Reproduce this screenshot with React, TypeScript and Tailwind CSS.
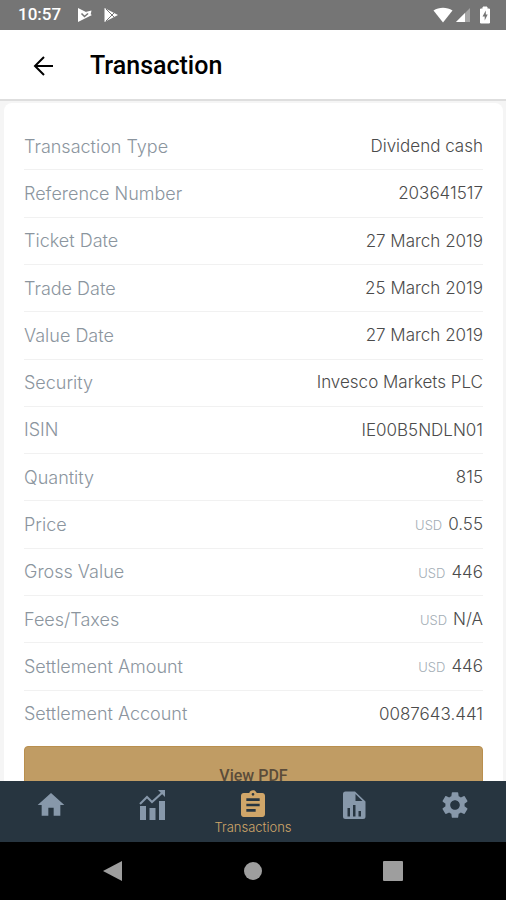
import { useState } from "react";
import type { ReactNode } from "react";
import { MdAssignment, MdHome, MdSettings } from "react-icons/md";

interface Detail {
  label: string;
  value: string;
  currency?: string;
}

const details: Detail[] = [
  { label: "Transaction Type", value: "Dividend cash" },
  { label: "Reference Number", value: "203641517" },
  { label: "Ticket Date", value: "27 March 2019" },
  { label: "Trade Date", value: "25 March 2019" },
  { label: "Value Date", value: "27 March 2019" },
  { label: "Security", value: "Invesco Markets PLC" },
  { label: "ISIN", value: "IE00B5NDLN01" },
  { label: "Quantity", value: "815" },
  { label: "Price", value: "0.55", currency: "USD" },
  { label: "Gross Value", value: "446", currency: "USD" },
  { label: "Fees/Taxes", value: "N/A", currency: "USD" },
  { label: "Settlement Amount", value: "446", currency: "USD" },
  { label: "Settlement Account", value: "0087643.441" },
];

const ChartIcon = () => (
  <svg className="size-8" viewBox="0 0 32 32" fill="currentColor">
    <path d="M4 17h6v14H4zM13.500 19h6v12h-6zM23 12h6v19h-6z" />
    <path d="M4 15l7-7 5 5L27 3" fill="none" stroke="currentColor" strokeWidth="2" />
    <path d="M22 1h7v7z" />
  </svg>
);

const ReportIcon = () => (
  <svg className="size-8" viewBox="0 0 32 32" fill="currentColor">
    <path
      fillRule="evenodd"
      d="M7.500 2.500h9.500l10.500 10v15a2.500 2.500 0 0 1-2.500 2.500H7.500A2.500 2.500 0 0 1 5 27.500V5A2.500 2.500 0 0 1 7.500 2.500zM17.500 5v7h7zM9.500 19v8.500h2.500v-8.500zM15 16v11.500h2.500V16zM20.500 22v5.500h2.500v-5.500z"
    />
  </svg>
);

const tabs: { name: string; icon: ReactNode }[] = [
  { name: "Home", icon: <MdHome className="size-8" /> },
  { name: "Performance", icon: <ChartIcon /> },
  { name: "Transactions", icon: <MdAssignment className="size-8" /> },
  { name: "Reports", icon: <ReportIcon /> },
  { name: "Settings", icon: <MdSettings className="size-8" /> },
];

const StatusBar = () => (
  <div className="flex h-[30px] shrink-0 items-center bg-[#757575] pr-[15px] pl-[18px] font-[Roboto,sans-serif] text-white">
    <span className="text-[17px] font-medium">10:57</span>
    <svg className="ml-4 size-4" viewBox="0 0 16 16">
      <path d="M1 1l14 7-14 7z" fill="#fff" />
      <path d="M4.500 6.500l3 3L15 3" fill="none" stroke="#757575" strokeWidth="1.500" />
      <path d="M8.500 5l6-1.500-1 4.500z" fill="#fff" />
    </svg>
    <svg className="ml-[10px] size-4" viewBox="0 0 16 16">
      <path d="M1.500 1L15 8 1.500 15z" fill="#fff" />
      <path d="M3 2l8 8M3 14l8-8" stroke="#757575" strokeWidth="1" />
    </svg>
    <div className="ml-auto flex items-center">
      <svg className="h-4 w-5" viewBox="0 0 20 16" fill="#fff">
        <path d="M0.500 3.500C6-0.300 14-0.300 19.500 3.500L10 15.500z" />
      </svg>
      <svg className="ml-[2px] size-4" viewBox="0 0 16 16" fill="#fff">
        <path d="M15 1v14H1z" opacity=".35" />
        <path d="M10 6v9H1z" />
      </svg>
      <svg className="ml-2 h-[18px] w-3" viewBox="0 0 12 18">
        <path d="M4 1h4v2h2.500v14h-9V3H4z" fill="#fff" stroke="#fff" strokeLinejoin="round" />
        <path d="M6.800 4.500L3.500 10.500h2.200v4l3-6H6.800z" fill="#757575" />
      </svg>
    </div>
  </div>
);

const DetailRow = ({ label, value, currency }: Detail) => (
  <div className="flex items-center justify-between border-b border-[#f1f1f1] pt-px last:border-transparent">
    <dt className="text-lg text-[#8b959e]">{label}</dt>
    <dd className="flex items-baseline gap-[6px] text-[17px] text-[#4b4b4b]">
      {currency && <span className="text-[13px] text-[#a3adb5]">{currency}</span>}
      {value}
    </dd>
  </div>
);

export default function App() {
  const [active, setActive] = useState("Transactions");

  return (
    <div className="flex h-screen flex-col overflow-hidden bg-[#f5f5f5] font-[Inter,sans-serif]">
      <StatusBar />

      <header className="flex h-[71px] shrink-0 items-center gap-8 border-b-2 border-[#dedede] bg-white px-[30px] pt-[2px] text-black">
        <button type="button" aria-label="Back">
          <svg className="size-7" viewBox="0 0 28 28" fill="none" stroke="currentColor" strokeWidth="2">
            <path d="M23 14H6M14 5l-9 9 9 9" />
          </svg>
        </button>
        <h1 className="font-[Roboto,sans-serif] text-[25px] font-medium">Transaction</h1>
      </header>

      <main className="min-h-0 flex-1 overflow-y-auto pt-[2px] pr-[3px] pl-1 [scrollbar-width:none]">
        <section className="rounded-lg bg-white px-5 py-5">
          <dl className="grid min-h-[615px] auto-rows-fr font-light">
            {details.map((detail) => (
              <DetailRow key={detail.label} {...detail} />
            ))}
          </dl>
          <button
            type="button"
            className="mt-2 h-[60px] w-full rounded-sm border border-[#b98f4e] bg-[#c09c64] font-[Roboto,sans-serif] text-base font-medium text-[#5b4c3a]"
          >
            View PDF
          </button>
        </section>
      </main>

      <nav className="grid h-[61px] shrink-0 grid-cols-5 bg-[#273540]">
        {tabs.map(({ name, icon }) => (
          <button
            key={name}
            type="button"
            aria-label={name}
            onClick={() => setActive(name)}
            className={`flex flex-col items-center pt-2 ${
              active === name ? "text-[#d0a669]" : "text-[#8798aa]"
            }`}
          >
            {icon}
            {active === name && <span className="text-[13px] leading-3 font-light">{name}</span>}
          </button>
        ))}
      </nav>

      <div className="flex h-[58px] shrink-0 items-center justify-center gap-[120px] bg-black text-[#9e9e9e]">
        <button type="button" aria-label="System back">
          <svg className="size-5" viewBox="0 0 20 20" fill="currentColor">
            <path d="M19 0v20L0 10z" />
          </svg>
        </button>
        <button type="button" aria-label="System home">
          <svg className="size-5" viewBox="0 0 20 20" fill="currentColor">
            <circle cx="10" cy="10" r="9" />
          </svg>
        </button>
        <button type="button" aria-label="Recent apps">
          <svg className="size-5" viewBox="0 0 20 20" fill="currentColor">
            <rect width="20" height="20" rx="1" />
          </svg>
        </button>
      </div>
    </div>
  );
}
